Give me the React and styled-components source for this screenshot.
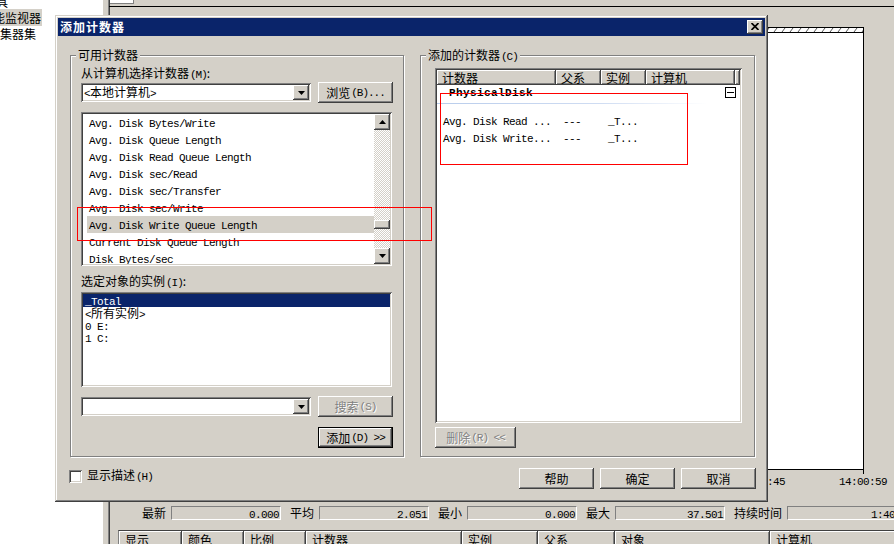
import React from "react";
import styled, { createGlobalStyle, css } from "styled-components";

const GRAY = "#d4d0c8";
const NAVY = "#0a246a";

const GlobalStyle = createGlobalStyle`
  html, body { margin: 0; padding: 0; background: ${GRAY}; }
  body {
    width: 894px;
    height: 544px;
    overflow: hidden;
    font-family: "Noto Sans CJK SC", sans-serif;
    font-size: 12px;
    color: #000;
  }
  * { box-sizing: border-box; }
`;

const raised = css`
  background: ${GRAY};
  box-shadow: inset -1px -1px #404040, inset 1px 1px #fff,
    inset -2px -2px #808080, inset 2px 2px ${GRAY};
`;

const sunken = css`
  box-shadow: inset 1px 1px #808080, inset -1px -1px #fff,
    inset 2px 2px #404040, inset -2px -2px ${GRAY};
`;

const Mono = styled.span`
  font-family: "Liberation Mono", monospace;
  font-size: 11px;
  letter-spacing: -0.6px;
  font-weight: ${(p) => (p.$bold ? 700 : 400)};
`;

const Acc = styled.span`
  font-family: "Liberation Mono", monospace;
  font-size: 11px;
  letter-spacing: -1px;
  margin-left: 1px;
`;

/* ---------- background: perfmon window ---------- */

const Desktop = styled.div`
  position: relative;
  display: flex;
  width: 894px;
  height: 544px;
  overflow: hidden;
  background: ${GRAY};
`;

const TreePane = styled.div`
  width: 103px;
  flex-shrink: 0;
  background: #fff;
  overflow: hidden;
`;

const TreeList = styled.div`
  margin-top: -6px;
`;

const TreeRow = styled.div`
  height: 16px;
  line-height: 16px;
  white-space: nowrap;
  margin-left: ${(p) => p.$shift}px;
`;

const TreeLabel = styled.span`
  padding-right: 1px;
  background: ${(p) => (p.$selected ? GRAY : "transparent")};
`;

const Splitter = styled.div`
  width: 5px;
  flex-shrink: 0;
  background: ${GRAY};
`;

const MonitorPane = styled.div`
  flex: 1;
  min-width: 0;
  display: flex;
  flex-direction: column;
  border-left: 1px solid #808080;
  box-shadow: inset 1px 0 #404040;
`;

const TopStrip = styled.div`
  height: 7px;
  flex-shrink: 0;
  border-bottom: 1px solid #000;
`;

const TopCell = styled.div`
  width: 24px;
  height: 4px;
  margin-left: 1px;
  background: #fff;
  border-right: 1px solid #808080;
  border-bottom: 1px solid #808080;
`;

const GraphWrap = styled.div`
  display: flex;
  justify-content: flex-end;
  padding-right: 30px;
  margin-top: 20px;
  height: 443px;
  flex-shrink: 0;
`;

const Graph = styled.div`
  width: 700px;
  height: 443px;
  background: #fff;
  border: 1px solid #000;
`;

const Hatch = styled.div`
  height: 5px;
  border-bottom: 1px solid #000;
  overflow: hidden;
  svg {
    display: block;
  }
`;

const TickRow = styled.div`
  display: flex;
  justify-content: flex-end;
  padding-right: 30px;
  height: 4px;
  flex-shrink: 0;
`;

const Tick = styled.div`
  width: 1px;
  height: 4px;
  background: #000;
`;

const TimeAxis = styled.div`
  display: flex;
  justify-content: flex-end;
  padding-right: 7px;
  height: 16px;
  line-height: 16px;
  flex-shrink: 0;
`;

const TimeLabel = styled(Mono)`
  margin-right: ${(p) => p.$gap || 0}px;
`;

const StatsRow = styled.div`
  display: flex;
  align-items: center;
  height: 16px;
  margin-top: 15px;
  padding-left: 33px;
  white-space: nowrap;
  flex-shrink: 0;
`;

const StatLabel = styled.span`
  line-height: 14px;
  margin-right: 5px;
`;

const StatField = styled.div`
  width: 110px;
  height: 14px;
  flex-shrink: 0;
  margin-right: 9px;
  border-top: 1px solid #808080;
  border-left: 1px solid #808080;
  border-bottom: 1px solid #fff;
  border-right: 1px solid #fff;
  text-align: right;
  padding-right: 1px;
  line-height: 12px;
`;

const CounterTable = styled.div`
  margin-top: 9px;
  margin-left: 9px;
  display: flex;
  border-top: 1px solid #404040;
  border-left: 1px solid #808080;
  flex-shrink: 0;
`;

const HeadCell = styled.div`
  ${raised};
  width: ${(p) => p.$w}px;
  flex-shrink: 0;
  height: 16px;
  line-height: 18px;
  padding-left: 6px;
  white-space: nowrap;
`;

/* ---------- dialog ---------- */

const Dialog = styled.div`
  position: absolute;
  left: 55px;
  top: 15px;
  width: 713px;
  height: 487px;
  padding: 3px;
  background: ${GRAY};
  box-shadow: inset -1px -1px #404040, inset 1px 1px ${GRAY},
    inset -2px -2px #808080, inset 2px 2px #fff;
`;

const TitleBar = styled.div`
  height: 18px;
  background: ${NAVY};
  display: flex;
  align-items: center;
  justify-content: space-between;
  padding: 0 2px 0 2px;
`;

const Title = styled.span`
  color: #fff;
  font-weight: 700;
  letter-spacing: 1px;
  line-height: 18px;
`;

const CloseButton = styled.div`
  ${raised};
  width: 16px;
  height: 14px;
  display: flex;
  align-items: center;
  justify-content: center;
  padding-bottom: 1px;
`;

const Body = styled.div`
  padding: 19px 9px 0 12px;
`;

const GroupsRow = styled.div`
  display: flex;
  gap: 16px;
`;

const GroupBox = styled.div`
  position: relative;
  width: ${(p) => p.$w}px;
  height: 402px;
  border: 1px solid #808080;
  box-shadow: inset 1px 1px #fff, 1px 1px #fff;
  padding: ${(p) => p.$pad};
  display: flex;
  flex-direction: column;
`;

const Legend = styled.span`
  position: absolute;
  top: -8px;
  left: 5px;
  padding: 0 2px;
  line-height: 14px;
  background: ${GRAY};
  white-space: nowrap;
`;

const FieldLabel = styled.div`
  height: 14px;
  line-height: 14px;
  margin-top: ${(p) => p.$top || 0}px;
  white-space: nowrap;
`;

const ControlRow = styled.div`
  display: flex;
  align-items: center;
  gap: 7px;
  height: 21px;
  margin-top: ${(p) => p.$top || 0}px;
`;

const Combo = styled.div`
  ${sunken};
  width: 230px;
  height: 19px;
  background: #fff;
  padding: 2px;
  display: flex;
  align-items: center;
  justify-content: space-between;
`;

const ComboText = styled.span`
  padding-left: 1px;
  line-height: 15px;
  white-space: nowrap;
`;

const ArrowButton = styled.div`
  ${raised};
  width: 16px;
  height: ${(p) => p.$h || 15}px;
  flex-shrink: 0;
  display: flex;
  align-items: center;
  justify-content: center;
`;

const Button = styled.div`
  ${raised};
  width: ${(p) => p.$w || 75}px;
  height: 21px;
  flex-shrink: 0;
  display: flex;
  align-items: center;
  justify-content: center;
  white-space: nowrap;
  line-height: 14px;
  color: ${(p) => (p.$disabled ? "#808080" : "#000")};
  text-shadow: ${(p) => (p.$disabled ? "1px 1px #fff" : "none")};
  ${(p) =>
    p.$default &&
    css`
      box-shadow: inset 0 0 0 1px #000, inset -2px -2px #404040,
        inset 2px 2px #fff, inset -3px -3px #808080;
    `}
`;

const ButtonRow = styled.div`
  display: flex;
  justify-content: ${(p) => p.$justify || "flex-end"};
  margin-top: ${(p) => p.$top || 0}px;
`;

const CounterList = styled.div`
  ${sunken};
  width: 311px;
  height: 154px;
  flex-shrink: 0;
  margin-top: 9px;
  background: #fff;
  padding: 2px;
  display: flex;
`;

const Items = styled.div`
  flex: 1;
  overflow: hidden;
`;

const CounterItem = styled.div`
  height: 17px;
  line-height: 16px;
  margin-left: 4px;
  padding-left: 2px;
  white-space: nowrap;
  background: ${(p) => (p.$selected ? GRAY : "transparent")};
`;

const ScrollBar = styled.div`
  width: 16px;
  flex-shrink: 0;
  display: flex;
  flex-direction: column;
`;

const ScrollTrack = styled.div`
  flex: 1;
  background: repeating-conic-gradient(${GRAY} 0 25%, #fff 0 50%) 0 0 / 2px
    2px;
`;

const ScrollThumb = styled.div`
  ${raised};
  height: 9px;
  margin-top: 90px;
`;

const InstanceList = styled.div`
  ${sunken};
  width: 311px;
  height: 95px;
  flex-shrink: 0;
  margin-top: 4px;
  background: #fff;
  padding: 2px;
`;

const InstanceItem = styled.div`
  height: 12px;
  line-height: 12px;
  padding-left: 2px;
  white-space: nowrap;
  background: ${(p) => (p.$selected ? NAVY : "transparent")};
  color: ${(p) => (p.$selected ? "#fff" : "#000")};
  &:first-child {
    height: 13px;
  }
`;

const ListView = styled.div`
  ${sunken};
  width: 307px;
  height: 355px;
  flex-shrink: 0;
  background: #fff;
  padding: 2px;
  overflow: hidden;
`;

const ListHeader = styled.div`
  display: flex;
  height: 15px;
`;

const ListHeadCell = styled.div`
  ${raised};
  width: ${(p) => p.$w}px;
  flex: ${(p) => (p.$w ? "0 0 auto" : "1")};
  line-height: 15px;
  padding-left: 5px;
  white-space: nowrap;
`;

const GroupRow = styled.div`
  display: flex;
  align-items: center;
  justify-content: space-between;
  height: 16px;
  padding-left: 12px;
  padding-right: 4px;
`;

const GroupName = styled(Mono)`
  letter-spacing: 0.4px;
`;

const CollapseBox = styled.div`
  position: relative;
  width: 11px;
  height: 11px;
  margin-top: -1px;
  border: 1px solid #000;
  background: #fff;
  &::after {
    content: "";
    position: absolute;
    left: 1px;
    right: 1px;
    top: 4px;
    height: 1px;
    background: #000;
  }
`;

const GroupLine = styled.div`
  height: 1px;
  width: 270px;
  margin-top: 2px;
  background: linear-gradient(
    to right,
    #b9cdec 0%,
    #cfdcf2 60%,
    rgba(255, 255, 255, 0) 100%
  );
`;

const RowsBlock = styled.div`
  margin-top: 7px;
`;

const ListRow = styled.div`
  display: flex;
  height: 17px;
  line-height: 17px;
  padding-left: 6px;
  white-space: nowrap;
`;

const ListCell = styled.div`
  width: ${(p) => p.$w}px;
  flex-shrink: 0;
`;

const Footer = styled.div`
  display: flex;
  align-items: flex-start;
  margin-top: 11px;
  height: 21px;
`;

const CheckLine = styled.div`
  display: flex;
  align-items: center;
  margin-left: -1px;
`;

const CheckBox = styled.div`
  ${sunken};
  width: 13px;
  height: 13px;
  background: #fff;
`;

const CheckText = styled.span`
  margin-left: 5px;
  line-height: 13px;
`;

const FooterButtons = styled.div`
  display: flex;
  gap: 6px;
  margin-left: auto;
`;

const Annotation = styled.div`
  position: absolute;
  left: ${(p) => p.$x}px;
  top: ${(p) => p.$y}px;
  width: ${(p) => p.$w}px;
  height: ${(p) => p.$h}px;
  border: 1px solid #ff0000;
  pointer-events: none;
`;

const Arrow = ({ up }) => (
  <svg width="7" height="4" viewBox="0 0 7 4">
    <polygon points={up ? "0,4 7,4 3.5,0" : "0,0 7,0 3.5,4"} fill="#000" />
  </svg>
);

const CloseGlyph = () => (
  <svg width="8" height="7" viewBox="0 0 8 7">
    <path d="M0.5 0 L7.5 7 M7.5 0 L0.5 7" stroke="#000" strokeWidth="1.7" />
  </svg>
);

const HatchStrip = () => (
  <svg width="100%" height="4">
    <defs>
      <pattern id="hatch" width="8" height="4" patternUnits="userSpaceOnUse">
        <path d="M1 4 L4 0" stroke="#555" strokeWidth="1" />
      </pattern>
    </defs>
    <rect width="100%" height="4" fill="url(#hatch)" />
  </svg>
);

const counters = [
  "Avg. Disk Bytes/Write",
  "Avg. Disk Queue Length",
  "Avg. Disk Read Queue Length",
  "Avg. Disk sec/Read",
  "Avg. Disk sec/Transfer",
  "Avg. Disk sec/Write",
  "Avg. Disk Write Queue Length",
  "Current Disk Queue Length",
  "Disk Bytes/sec",
];

const stats = [
  ["最新", "0.000"],
  ["平均", "2.051"],
  ["最小", "0.000"],
  ["最大", "37.501"],
  ["持续时间", "1:40"],
];

const tableCols = [
  ["显示", 63],
  ["颜色", 62],
  ["比例", 62],
  ["计数器", 156],
  ["实例", 76],
  ["父系", 77],
  ["对象", 155],
  ["计算机", 130],
];

const added = [
  ["Avg. Disk Read ...", "---", "_T..."],
  ["Avg. Disk Write...", "---", "_T..."],
];

export default function App() {
  return (
    <>
      <GlobalStyle />
      <Desktop>
        <TreePane>
          <TreeList>
            <TreeRow $shift={-16}>
              <TreeLabel>工具</TreeLabel>
            </TreeRow>
            <TreeRow $shift={-19}>
              <TreeLabel $selected>性能监视器</TreeLabel>
            </TreeRow>
            <TreeRow $shift={-36}>
              <TreeLabel>数据收集器集</TreeLabel>
            </TreeRow>
          </TreeList>
        </TreePane>
        <Splitter />
        <MonitorPane>
          <TopStrip>
            <TopCell />
          </TopStrip>
          <GraphWrap>
            <Graph>
              <Hatch>
                <HatchStrip />
              </Hatch>
            </Graph>
          </GraphWrap>
          <TickRow>
            <Tick />
          </TickRow>
          <TimeAxis>
            <TimeLabel $gap={54}>13:59:45</TimeLabel>
            <TimeLabel>14:00:59</TimeLabel>
          </TimeAxis>
          <StatsRow>
            {stats.map(([label, value]) => (
              <React.Fragment key={label}>
                <StatLabel>{label}</StatLabel>
                <StatField>
                  <Mono>{value}</Mono>
                </StatField>
              </React.Fragment>
            ))}
          </StatsRow>
          <CounterTable>
            {tableCols.map(([label, w]) => (
              <HeadCell key={label} $w={w}>
                {label}
              </HeadCell>
            ))}
          </CounterTable>
        </MonitorPane>

        <Dialog>
          <TitleBar>
            <Title>添加计数器</Title>
            <CloseButton>
              <CloseGlyph />
            </CloseButton>
          </TitleBar>
          <Body>
            <GroupsRow>
              <GroupBox $w={334} $pad="10px 10px 0 10px">
                <Legend>可用计数器</Legend>
                <FieldLabel>
                  从计算机选择计数器<Acc>(M)</Acc>:
                </FieldLabel>
                <ControlRow $top={2}>
                  <Combo>
                    <ComboText>
                      <Mono>&lt;</Mono>本地计算机<Mono>&gt;</Mono>
                    </ComboText>
                    <ArrowButton>
                      <Arrow />
                    </ArrowButton>
                  </Combo>
                  <Button>
                    浏览<Acc>(B)...</Acc>
                  </Button>
                </ControlRow>
                <CounterList>
                  <Items>
                    {counters.map((c, i) => (
                      <CounterItem key={c} $selected={i === 6}>
                        <Mono>{c}</Mono>
                      </CounterItem>
                    ))}
                  </Items>
                  <ScrollBar>
                    <ArrowButton $h={16}>
                      <Arrow up />
                    </ArrowButton>
                    <ScrollTrack>
                      <ScrollThumb />
                    </ScrollTrack>
                    <ArrowButton $h={16}>
                      <Arrow />
                    </ArrowButton>
                  </ScrollBar>
                </CounterList>
                <FieldLabel $top={8}>
                  选定对象的实例<Acc>(I)</Acc>:
                </FieldLabel>
                <InstanceList>
                  <InstanceItem $selected>
                    <Mono>_Total</Mono>
                  </InstanceItem>
                  <InstanceItem>
                    <Mono>&lt;</Mono>所有实例<Mono>&gt;</Mono>
                  </InstanceItem>
                  <InstanceItem>
                    <Mono>0 E:</Mono>
                  </InstanceItem>
                  <InstanceItem>
                    <Mono>1 C:</Mono>
                  </InstanceItem>
                </InstanceList>
                <ControlRow $top={9}>
                  <Combo>
                    <ComboText />
                    <ArrowButton>
                      <Arrow />
                    </ArrowButton>
                  </Combo>
                  <Button $disabled>
                    搜索<Acc>(S)</Acc>
                  </Button>
                </ControlRow>
                <ButtonRow $top={10}>
                  <Button $default>
                    添加<Acc>(D) &gt;&gt;</Acc>
                  </Button>
                </ButtonRow>
              </GroupBox>

              <GroupBox $w={335} $pad="12px 0 0 14px">
                <Legend>
                  添加的计数器<Acc>(C)</Acc>
                </Legend>
                <ListView>
                  <ListHeader>
                    <ListHeadCell $w={119}>计数器</ListHeadCell>
                    <ListHeadCell $w={45}>父系</ListHeadCell>
                    <ListHeadCell $w={45}>实例</ListHeadCell>
                    <ListHeadCell $w={89}>计算机</ListHeadCell>
                    <ListHeadCell />
                  </ListHeader>
                  <GroupRow>
                    <GroupName $bold>PhysicalDisk</GroupName>
                    <CollapseBox />
                  </GroupRow>
                  <GroupLine />
                  <RowsBlock>
                    {added.map((r) => (
                      <ListRow key={r[0]}>
                        <ListCell $w={120}>
                          <Mono>{r[0]}</Mono>
                        </ListCell>
                        <ListCell $w={45}>
                          <Mono>{r[1]}</Mono>
                        </ListCell>
                        <ListCell $w={45}>
                          <Mono>{r[2]}</Mono>
                        </ListCell>
                      </ListRow>
                    ))}
                  </RowsBlock>
                </ListView>
                <ButtonRow $top={4} $justify="flex-start">
                  <Button $w={81} $disabled>
                    删除<Acc>(R) &lt;&lt;</Acc>
                  </Button>
                </ButtonRow>
              </GroupBox>
            </GroupsRow>
            <Footer>
              <CheckLine>
                <CheckBox />
                <CheckText>
                  显示描述<Acc>(H)</Acc>
                </CheckText>
              </CheckLine>
              <FooterButtons>
                <Button>帮助</Button>
                <Button>确定</Button>
                <Button>取消</Button>
              </FooterButtons>
            </Footer>
          </Body>
        </Dialog>

        <Annotation $x={77} $y={207} $w={355} $h={34} />
        <Annotation $x={440} $y={93} $w={248} $h={72} />
      </Desktop>
    </>
  );
}
